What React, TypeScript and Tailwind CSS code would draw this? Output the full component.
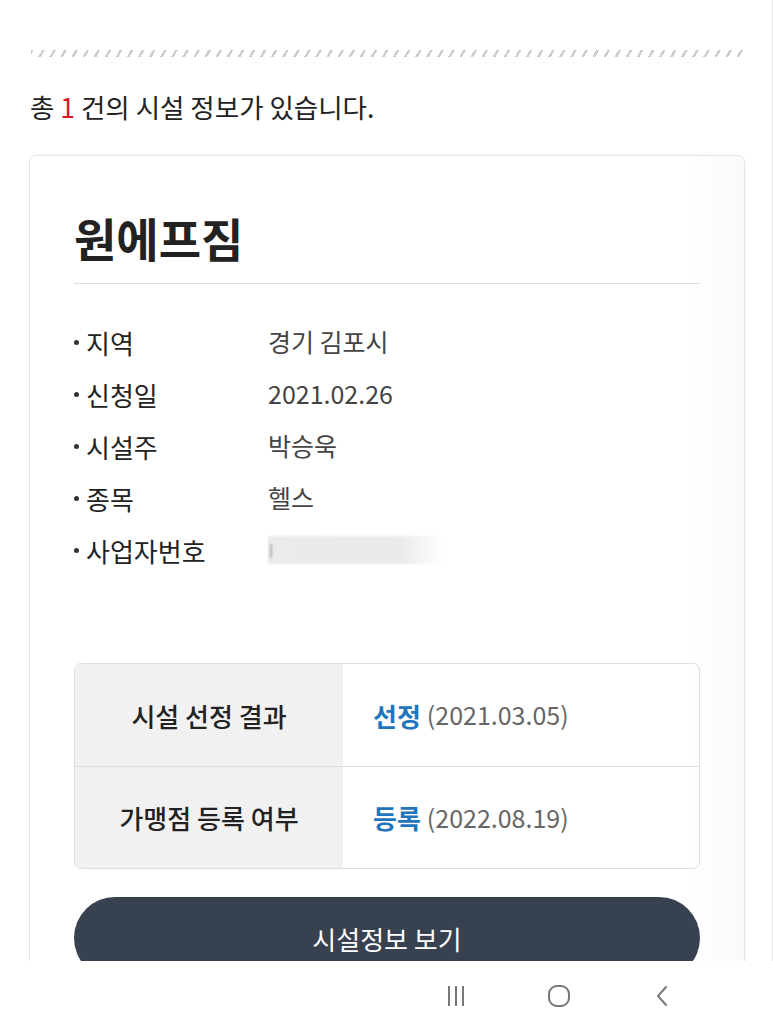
import React from "react";

const rows: { label: string; value: string }[] = [
  { label: "지역", value: "경기 김포시" },
  { label: "신청일", value: "2021.02.26" },
  { label: "시설주", value: "박승욱" },
  { label: "종목", value: "헬스" },
];

function Bullet() {
  return <span className="w-[5px] h-[5px] rounded-full bg-[#333] mr-[7px] shrink-0" />;
}

export default function App() {
  return (
    <div className="w-[773px] h-[1031px] flex flex-col overflow-hidden bg-white font-['Noto_Sans_CJK_KR','Noto_Sans',sans-serif] text-[#222]">
      <div className="flex-1 min-h-0 overflow-hidden border-r border-[#e6e6e6] pl-[30px] pr-[27px] pt-[50px]">
        <div className="h-[7px] ml-[1px] bg-[repeating-linear-gradient(120deg,#cccccc_0px,#cccccc_2.4px,transparent_2.4px,transparent_9.6px)]" />
        <p className="mt-[33px] text-[26.5px] leading-[34px] text-[#222]">
          총 <span className="text-[#d7191f]">1</span> 건의 시설 정보가 있습니다.
        </p>
        <div className="mt-[31px] -ml-[1px] rounded-[7px] border border-[#e4e4e4] shadow-[0_0_4px_rgba(0,0,0,0.04)] bg-[linear-gradient(to_right,#ffffff_92%,#fafafa)] px-[44px] pt-[58px] pb-[60px]">
          <h2 className="text-[46px] leading-[46px] font-bold text-[#222] pb-[23px] border-b border-[#dedede]">원에프짐</h2>
          <ul className="mt-[32px]">
            {rows.map((r) => (
              <li key={r.label} className="flex items-center h-[52px] text-[26px]">
                <span className="w-[194px] flex items-center text-[#222]">
                  <Bullet />
                  {r.label}
                </span>
                <span className="text-[#444] text-[25px]">{r.value}</span>
              </li>
            ))}
            <li className="flex items-center h-[52px] text-[26px]">
              <span className="w-[194px] flex items-center text-[#222]">
                <Bullet />
                사업자번호
              </span>
              <span className="relative w-[175px] h-[28px] bg-[linear-gradient(to_right,#ebebeb_0%,#eaeaea_75%,rgba(255,255,255,0)_100%)] blur-[1px]">
                <span className="absolute left-[2px] top-[8px] w-[2px] h-[14px] bg-[#888] opacity-60" />
              </span>
            </li>
          </ul>
          <div className="mt-[87px] rounded-[7px] border border-[#dedede] overflow-hidden">
            <div className="flex h-[102px]">
              <div className="w-[268px] bg-[#f1f1f1] flex items-center justify-center text-[26px] font-medium text-[#222]">시설 선정 결과</div>
              <div className="flex-1 flex items-center pl-[30px] text-[26px]">
                <span className="font-semibold text-[#1f76bd]">선정</span>
                <span className="ml-[6px] text-[#666] text-[25px]">(2021.03.05)</span>
              </div>
            </div>
            <div className="flex h-[102px] border-t border-[#dedede]">
              <div className="w-[268px] bg-[#f1f1f1] flex items-center justify-center text-[26px] font-medium text-[#222]">가맹점 등록 여부</div>
              <div className="flex-1 flex items-center pl-[30px] text-[26px]">
                <span className="font-semibold text-[#1f76bd]">등록</span>
                <span className="ml-[6px] text-[#666] text-[25px]">(2022.08.19)</span>
              </div>
            </div>
          </div>
          <button className="mt-[28px] w-full h-[82px] rounded-full bg-[#37414f] text-white text-[26px] flex items-center justify-center">
            시설정보 보기
          </button>
        </div>
      </div>
      <div className="h-[70px] shrink-0 bg-white flex items-center justify-end pr-[60px]">
        <div className="w-[103px] flex justify-center">
          <svg width="20" height="22" viewBox="0 0 20 22" fill="none" stroke="#777" strokeWidth="2">
            <line x1="3" y1="1" x2="3" y2="21" />
            <line x1="10" y1="1" x2="10" y2="21" />
            <line x1="17" y1="1" x2="17" y2="21" />
          </svg>
        </div>
        <div className="w-[103px] flex justify-center">
          <svg width="24" height="24" viewBox="0 0 24 24" fill="none" stroke="#777" strokeWidth="2">
            <rect x="2" y="2" width="20" height="20" rx="8" />
          </svg>
        </div>
        <div className="w-[103px] flex justify-center">
          <svg width="16" height="22" viewBox="0 0 16 22" fill="none" stroke="#777" strokeWidth="2" strokeLinecap="round">
            <polyline points="12,2 4,11 12,20" />
          </svg>
        </div>
      </div>
    </div>
  );
}
